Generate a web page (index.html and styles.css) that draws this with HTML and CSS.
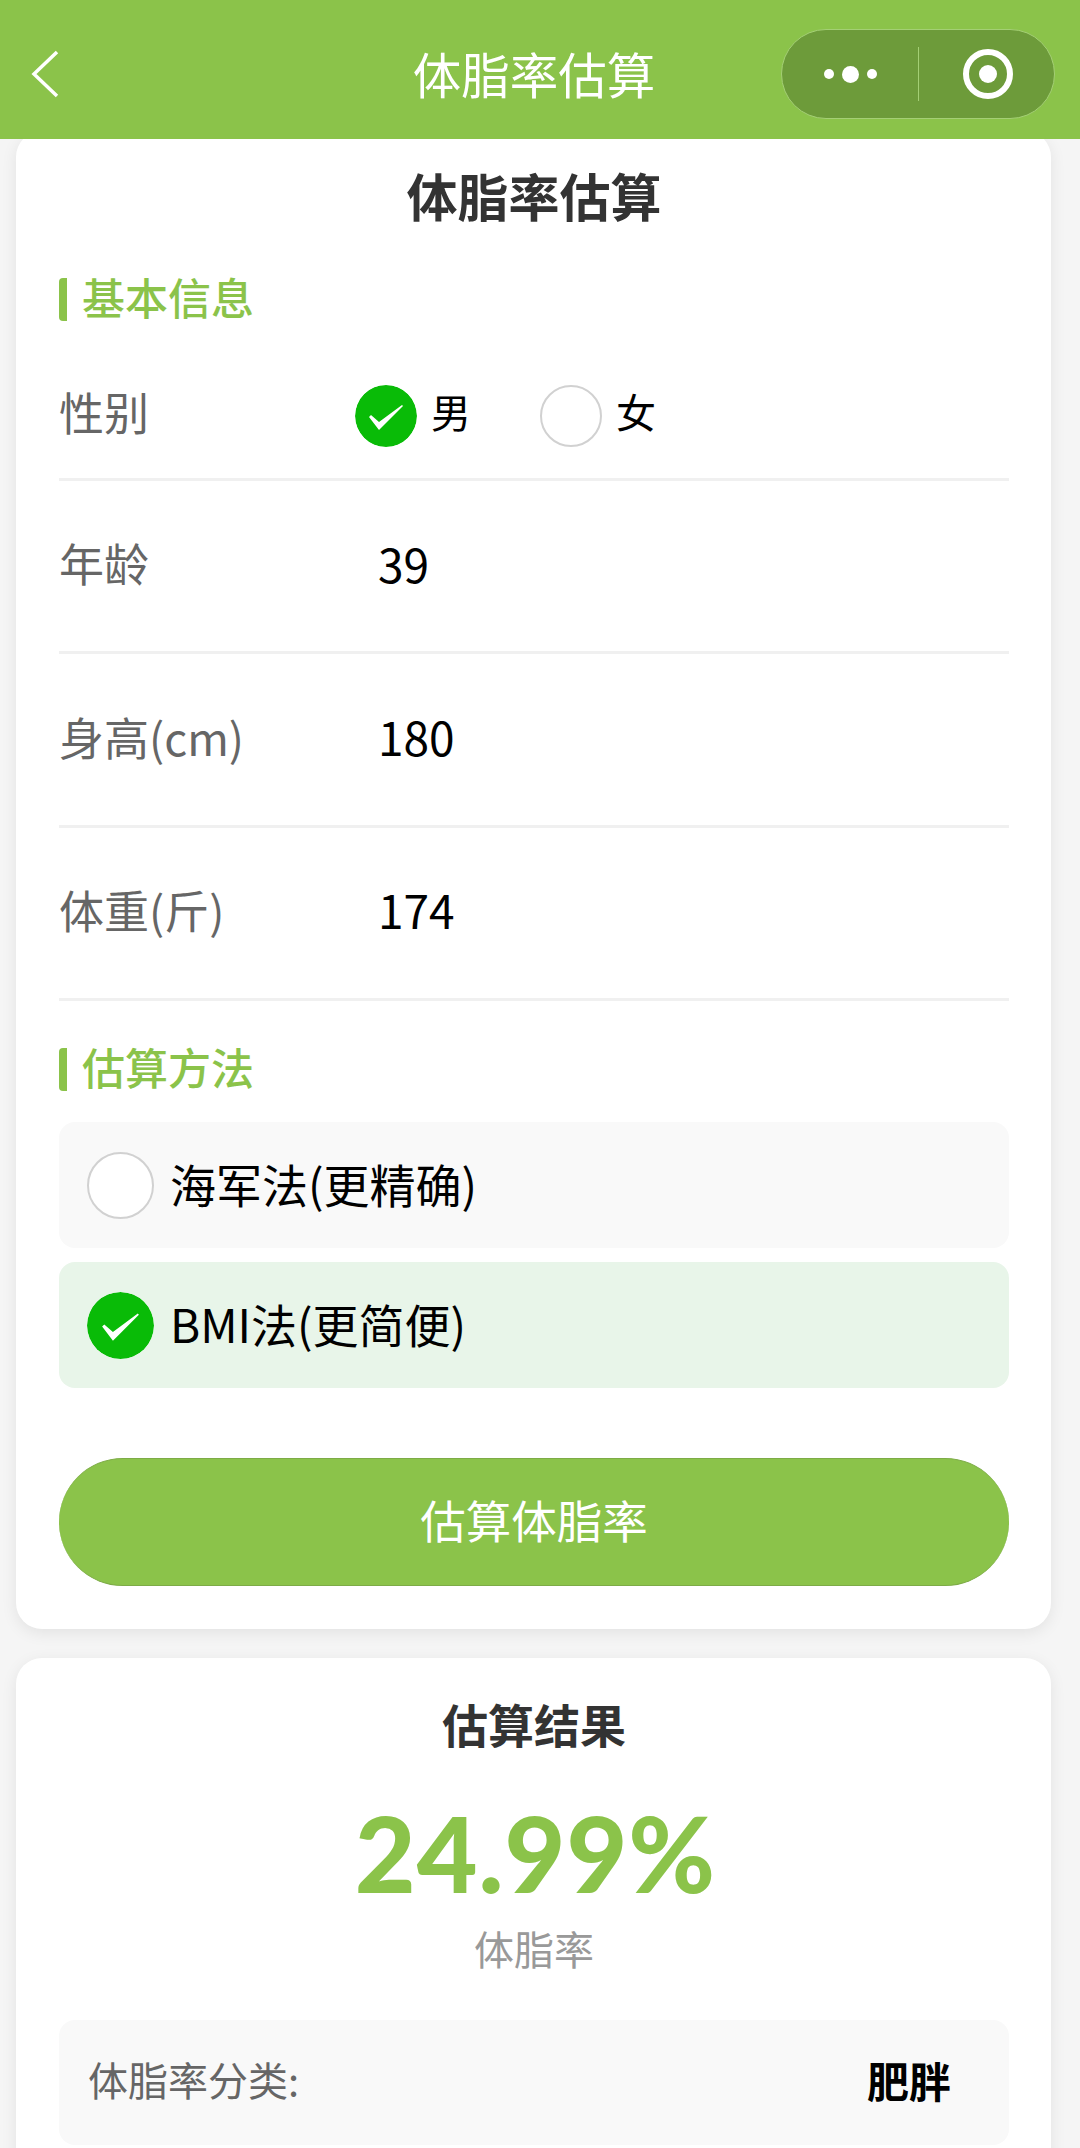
FILE: index.html
```html
<!DOCTYPE html>
<html lang="zh-CN">
<head>
  <meta charset="UTF-8" />
  <meta name="viewport" content="width=device-width, initial-scale=1" />
  <title>体脂率估算</title>
  <link rel="stylesheet" href="styles.css">
</head>
<body>
  <header class="nav">
    <svg class="nav-back" viewBox="0 0 28 48"><path d="M26 2 L3 24 L26 46" /></svg>
    <div class="nav-title">体脂率估算</div>
    <div class="capsule">
      <div class="capsule-more"><i class="dot"></i><i class="dot dot-big"></i><i class="dot"></i></div>
      <div class="capsule-line"></div>
      <div class="capsule-close"><i class="target"></i></div>
    </div>
  </header>

  <main class="page">
    <section class="card form-card">
      <h1 class="card-title">体脂率估算</h1>

      <h2 class="section-head">基本信息</h2>
      <div class="row row-gender">
        <span class="row-label">性别</span>
        <div class="gender-group">
          <label class="radio-item">
            <svg class="radio on" viewBox="0 0 62 62"><circle cx="31" cy="31" r="31" /><path d="M14 32 l2-2 8 7 L47 20 l1 1 L24 45z" /></svg>
            <span class="radio-text">男</span>
          </label>
          <label class="radio-item">
            <span class="radio off"></span>
            <span class="radio-text">女</span>
          </label>
        </div>
      </div>
      <div class="row">
        <span class="row-label">年龄</span>
        <span class="row-value">39</span>
      </div>
      <div class="row">
        <span class="row-label">身高(cm)</span>
        <span class="row-value">180</span>
      </div>
      <div class="row">
        <span class="row-label">体重(斤)</span>
        <span class="row-value">174</span>
      </div>

      <h2 class="section-head section-method">估算方法</h2>
      <div class="method-list">
        <label class="method">
          <span class="radio off big"></span>
          <span class="method-text">海军法(更精确)</span>
        </label>
        <label class="method method-active">
          <svg class="radio on big" viewBox="0 0 62 62"><circle cx="31" cy="31" r="31" /><path d="M14 32 l2-2 8 7 L47 20 l1 1 L24 45z" /></svg>
          <span class="method-text">BMI法(更简便)</span>
        </label>
      </div>

      <button class="submit-btn" type="button">估算体脂率</button>
    </section>

    <section class="card result-card">
      <h2 class="result-title">估算结果</h2>
      <div class="result-number">24.99%</div>
      <div class="result-label">体脂率</div>
      <div class="result-box">
        <span class="result-key">体脂率分类:</span>
        <span class="result-val">肥胖</span>
      </div>
    </section>
  </main>
</body>
</html>
```

FILE: styles.css
```css
* {
  box-sizing: border-box;
}

html, body {
  margin: 0;
  height: 2148px;
  overflow: hidden;
}

body {
  background: #f5f5f5;
  font-family: "Noto Sans CJK SC", "Noto Sans", sans-serif;
  color: #000;
}

/* Top bar */
.nav {
  position: relative;
  z-index: 2;
  height: 139px;
  background: #8bc34a;
  display: grid;
  grid-template-columns: 1fr auto 1fr;
  align-items: center;
  padding: 9px 25px 0 13px;
}

.nav-back {
  width: 28px;
  height: 48px;
  margin-left: 18px;
}

.nav-back path {
  fill: none;
  stroke: #fff;
  stroke-width: 3.5;
}

.nav-title {
  color: #fff;
  font-size: 48.5px;
  line-height: 60px;
  padding-bottom: 2px;
}

.capsule {
  justify-self: end;
  width: 274px;
  height: 90px;
  border-radius: 45px;
  background: #6d9b3a;
  border: 1px solid #a4cf75;
  display: flex;
  align-items: center;
}

.capsule-more {
  width: 136px;
  display: flex;
  align-items: center;
  justify-content: center;
  gap: 8px;
}

.dot {
  width: 10px;
  height: 10px;
  border-radius: 50%;
  background: #fff;
}

.dot-big {
  width: 17px;
  height: 17px;
}

.capsule-line {
  width: 1px;
  height: 54px;
  background: #a4cf75;
}

.capsule-close {
  flex: 1;
  display: flex;
  justify-content: center;
  padding-left: 3px;
}

.target {
  width: 50px;
  height: 50px;
  border-radius: 50%;
  border: 6px solid #fff;
  display: flex;
  align-items: center;
  justify-content: center;
}

.target::after {
  content: "";
  width: 18px;
  height: 18px;
  border-radius: 50%;
  background: #fff;
}

/* Cards */
.page {
  width: 1035px;
  margin: -8px 0 0 16px;
}

.card {
  background: #fff;
  border-radius: 26px;
  box-shadow: 0 4px 16px rgba(0, 0, 0, 0.08);
  padding: 0 42px 0 43px;
}

.form-card {
  padding-top: 29px;
  padding-bottom: 43px;
}

.card-title {
  margin: 0;
  padding-bottom: 3px;
  text-align: center;
  font-size: 51px;
  line-height: 70px;
  font-weight: 700;
  color: #333;
}

.section-head {
  margin: 45px 0 26px;
  height: 43px;
  border-left: 8px solid #8bc34a;
  border-radius: 4px;
  padding-left: 15px;
  font-size: 43px;
  line-height: 36px;
  font-weight: 500;
  color: #8bc34a;
}

.section-method {
  margin: 47px 0 31px;
}

/* Form rows */
.row {
  height: 173.4px;
  display: flex;
  align-items: center;
  padding-bottom: 7px;
  border-bottom: 3px solid #f0f0f0;
}

.row-gender {
  height: 134px;
  padding-bottom: 0;
}

.row-label {
  width: 319px;
  font-size: 45px;
  color: #666;
}

.row-gender .row-label {
  padding-bottom: 3px;
}

.row-value {
  font-size: 46px;
}

.gender-group {
  display: flex;
  gap: 69px;
  margin-left: -23px;
}

.radio-item {
  display: flex;
  align-items: center;
  gap: 14px;
  font-size: 40px;
}

.radio-text {
  padding-bottom: 3px;
}

.radio {
  display: block;
  flex: none;
  width: 62px;
  height: 62px;
  margin-top: 6px;
  border-radius: 50%;
}

.radio.off {
  background: #fff;
  border: 2px solid #d1d1d1;
}

.radio.on circle {
  fill: #09bb07;
}

.radio.on path {
  fill: #fff;
}

.radio.big {
  width: 67px;
  height: 67px;
  margin-top: 0;
}

/* Method options */
.method-list {
  display: flex;
  flex-direction: column;
  gap: 14px;
}

.method {
  height: 126px;
  border-radius: 16px;
  background: #f9f9f9;
  padding-left: 28px;
  display: flex;
  align-items: center;
  gap: 16px;
  font-size: 46px;
}

.method-text {
  padding-bottom: 5px;
}

.method-active {
  background: #e8f5e9;
}

.submit-btn {
  display: block;
  width: 100%;
  height: 128px;
  margin-top: 70px;
  padding: 0 0 7px;
  border: 0;
  border-top: 1px solid #7dab47;
  border-bottom: 1px solid #7dab47;
  border-radius: 64px;
  background: #8bc34a;
  color: #fff;
  font-family: inherit;
  font-size: 45.5px;
}

/* Result */
.result-card {
  margin-top: 29px;
  padding-top: 33px;
  padding-bottom: 40px;
  text-align: center;
}

.result-title {
  margin: 0;
  font-size: 46px;
  line-height: 64px;
  font-weight: 700;
  color: #333;
}

.result-number {
  margin-top: 37px;
  padding-left: 3px;
  font-family: "Lato", "Noto Sans", sans-serif;
  font-size: 105px;
  letter-spacing: 1px;
  line-height: 120px;
  font-weight: 900;
  color: #8bc34a;
}

.result-label {
  margin-top: 11px;
  font-size: 40px;
  line-height: 50px;
  color: #999;
}

.result-box {
  height: 125px;
  margin-top: 47px;
  border-radius: 16px;
  background: #f9f9f9;
  padding: 0 58px 7px 29px;
  display: flex;
  align-items: center;
  justify-content: space-between;
}

.result-key {
  font-size: 40px;
  color: #666;
}

.result-val {
  font-size: 42px;
  font-weight: 700;
}
```
